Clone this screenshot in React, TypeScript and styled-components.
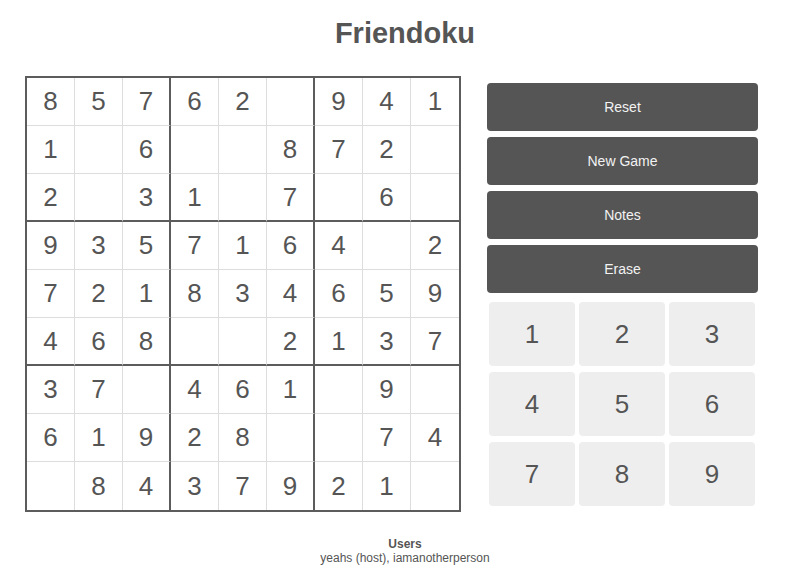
import React from "react";
import styled, { createGlobalStyle } from "styled-components";

const Global = createGlobalStyle`
  html, body { margin: 0; padding: 0; background: #fff; }
  body { font-family: "Liberation Sans", Arial, Helvetica, sans-serif; color: #555; }
`;

const Page = styled.div`
  width: 770px;
  margin-left: 20px;
  display: flex;
  flex-direction: column;
  align-items: stretch;
`;

const Title = styled.h1`
  margin: 0;
  padding-top: 17px;
  height: 76px;
  box-sizing: border-box;
  text-align: center;
  font-size: 29px;
  font-weight: 700;
  color: #555;
  line-height: 32px;
`;

const Main = styled.div`
  display: flex;
  align-items: flex-start;
  padding-left: 5px;
  gap: 26px;
`;

const Board = styled.div`
  display: grid;
  grid-template-columns: repeat(9, 48px);
  grid-template-rows: repeat(9, 48px);
  border: 2px solid #5c5c5c;
  width: max-content;
`;

const Cell = styled.div<{ $r: number; $c: number }>`
  box-sizing: border-box;
  display: flex;
  align-items: center;
  justify-content: center;
  font-size: 26px;
  color: #555;
  border-right: ${(p) =>
    p.$c === 8 ? "none" : p.$c % 3 === 2 ? "2px solid #5c5c5c" : "1px solid #ddd"};
  border-bottom: ${(p) =>
    p.$r === 8 ? "none" : p.$r % 3 === 2 ? "2px solid #5c5c5c" : "1px solid #ddd"};
`;

const Controls = styled.div`
  width: 271px;
  display: flex;
  flex-direction: column;
  gap: 6px;
  padding-top: 7px;
`;

const ActionButton = styled.button`
  height: 48px;
  border: none;
  border-radius: 4px;
  background: #555;
  color: #f2f2f2;
  font-family: "Liberation Sans", Arial, sans-serif;
  font-size: 14px;
  cursor: pointer;
`;

const Pad = styled.div`
  margin-top: 3px;
  padding: 0 3px 0 2px;
  display: grid;
  grid-template-columns: repeat(3, 86px);
  grid-auto-rows: 64px;
  column-gap: 4px;
  row-gap: 6px;
`;

const PadKey = styled.button`
  border: none;
  border-radius: 4px;
  background: #eee;
  color: #555;
  font-family: "Liberation Sans", Arial, sans-serif;
  font-size: 26px;
  cursor: pointer;
`;

const Users = styled.div`
  margin-top: 25px;
  text-align: center;
  font-size: 12px;
  line-height: 14px;
  color: #555;
`;

const UsersLabel = styled.div`
  font-weight: 700;
`;

const rows: string[] = [
  "85762 941",
  "1 6  872 ",
  "2 31 7 6 ",
  "9357164 2",
  "721834659",
  "468  2137",
  "37 461 9 ",
  "61928  74",
  " 8437921 ",
];

export default function App() {
  return (
    <>
      <Global />
      <Page>
        <Title>Friendoku</Title>
        <Main>
          <Board>
            {rows.map((row, r) =>
              row.split("").map((ch, c) => (
                <Cell key={`${r}-${c}`} $r={r} $c={c}>
                  {ch.trim()}
                </Cell>
              ))
            )}
          </Board>
          <Controls>
            <ActionButton>Reset</ActionButton>
            <ActionButton>New Game</ActionButton>
            <ActionButton>Notes</ActionButton>
            <ActionButton>Erase</ActionButton>
            <Pad>
              {[1, 2, 3, 4, 5, 6, 7, 8, 9].map((n) => (
                <PadKey key={n}>{n}</PadKey>
              ))}
            </Pad>
          </Controls>
        </Main>
        <Users>
          <UsersLabel>Users</UsersLabel>
          <div>yeahs (host), iamanotherperson</div>
        </Users>
      </Page>
    </>
  );
}
